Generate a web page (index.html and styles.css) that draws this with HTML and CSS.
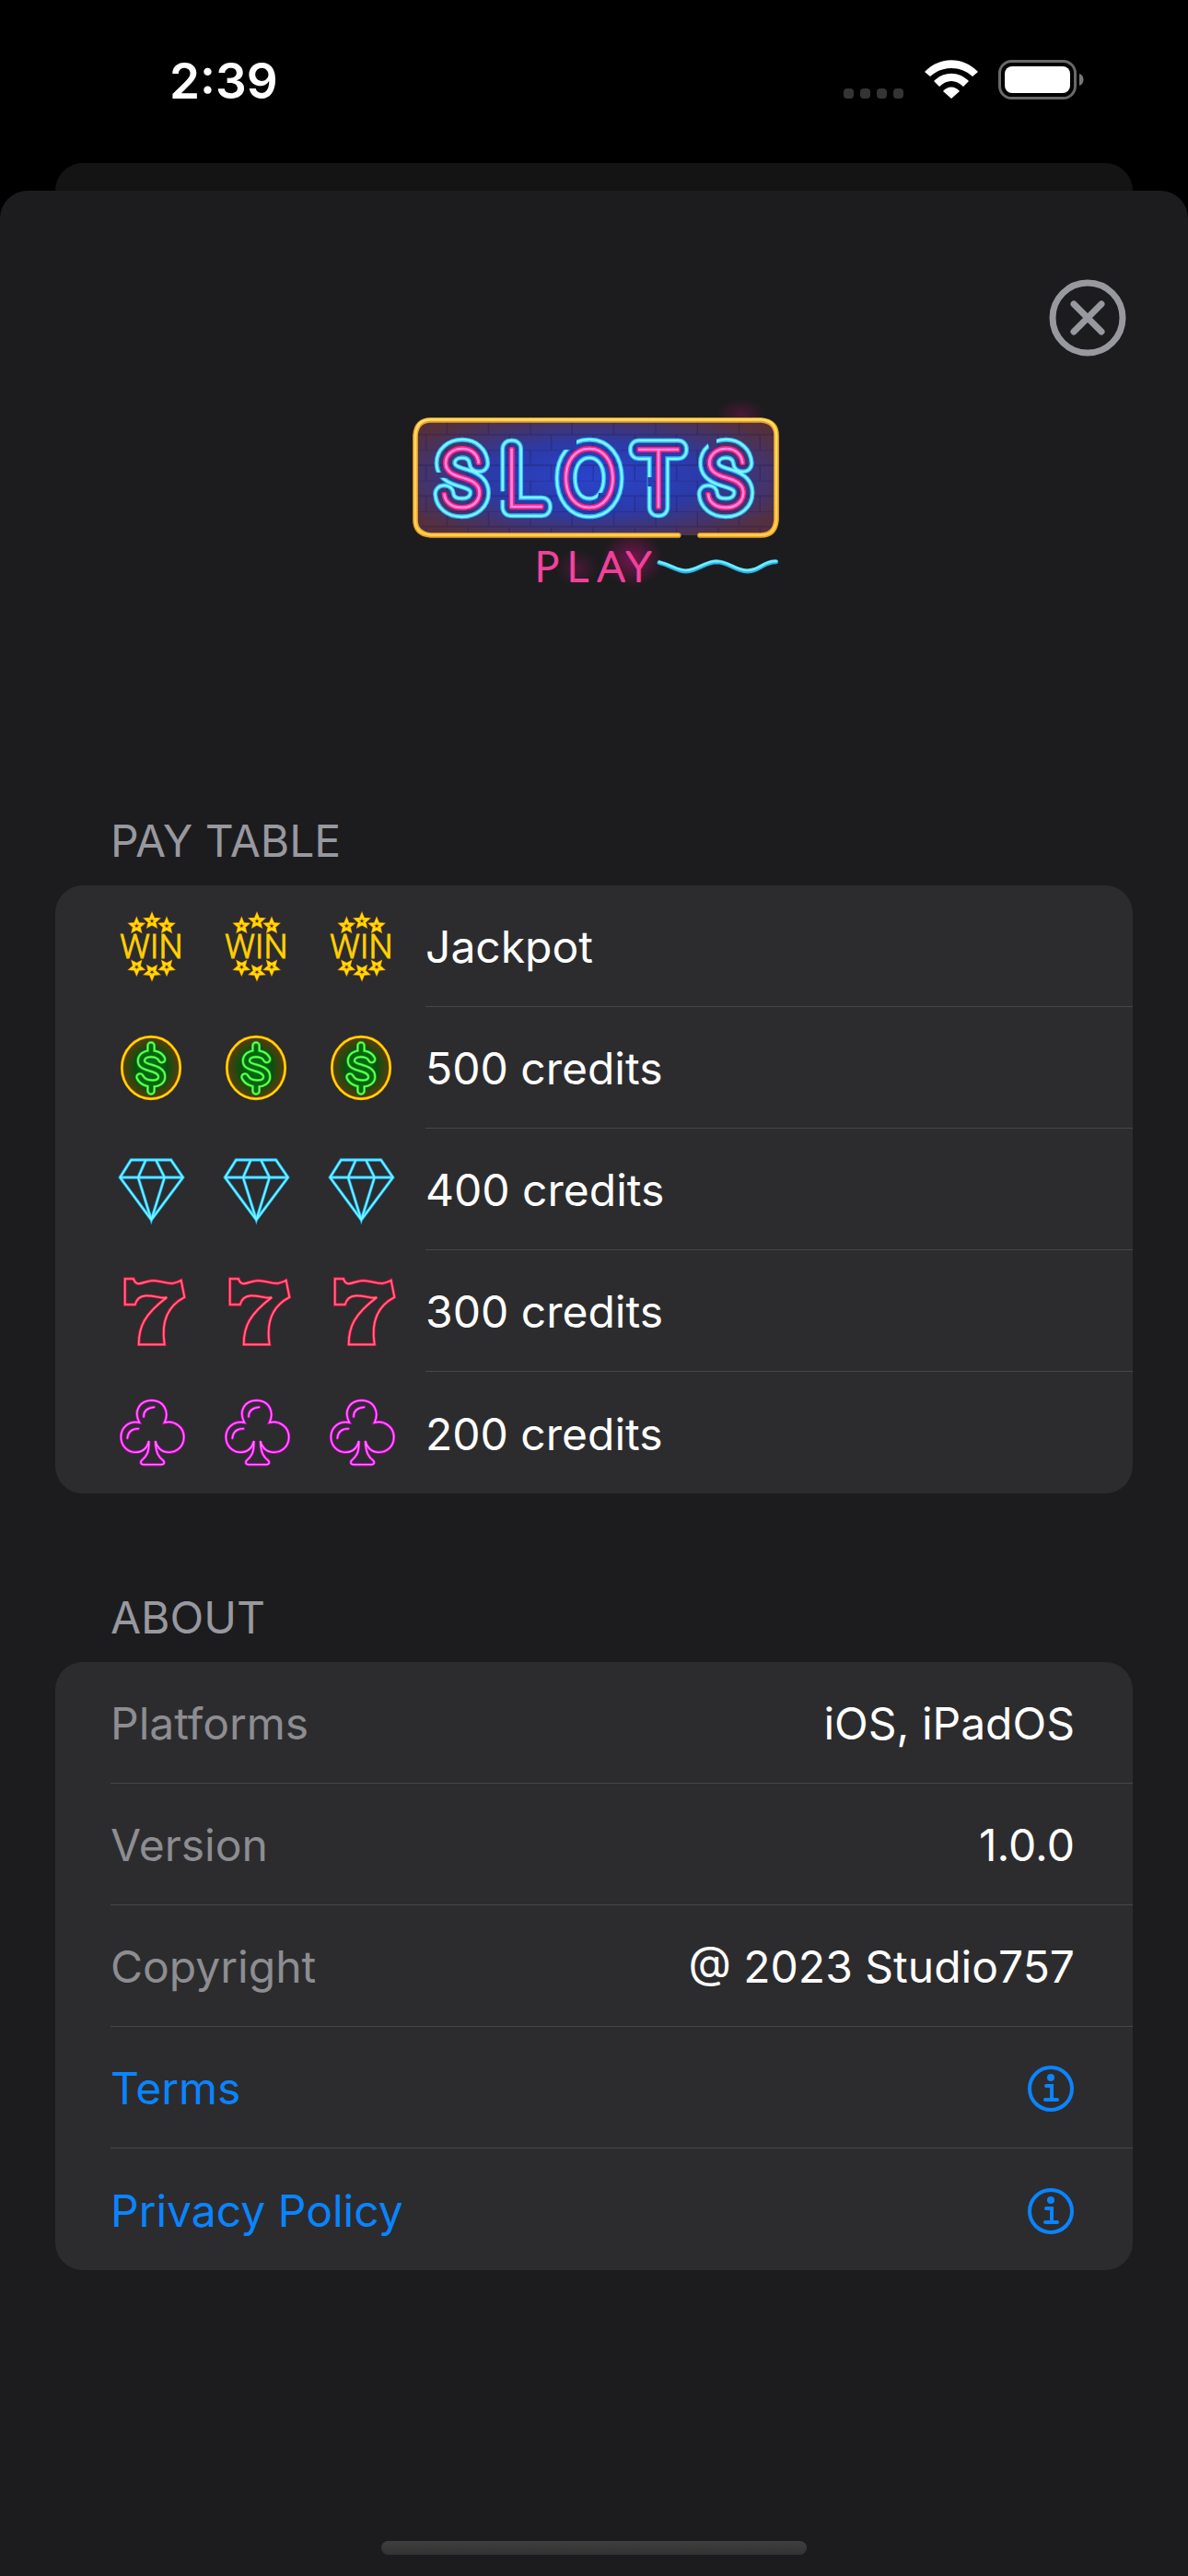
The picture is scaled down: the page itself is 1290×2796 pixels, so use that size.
FILE: index.html
```html
<!DOCTYPE html>
<html lang="en">
<head>
<meta charset="utf-8">
<meta name="viewport" content="width=device-width, initial-scale=1">
<title>Slots Play – Info</title>
<link rel="stylesheet" href="styles.css">
</head>
<body>

<svg class="sprite" aria-hidden="true">
  <defs>
    <path id="star" d="M0-18 5-6 18-5 8 4 11 16 0 10-11 16-8 4-18-5-5-6Z"/>
    <g id="stars">
      <use href="#star" x="165" y="88"/>
      <use href="#star" x="115" y="104"/>
      <use href="#star" x="213" y="104"/>
      <g transform="scale(1 -1)">
        <use href="#star" x="165" y="-256"/>
        <use href="#star" x="115" y="-240"/>
        <use href="#star" x="213" y="-240"/>
      </g>
    </g>
    <path id="dollar" d="M197 539C186 514 130 514 130 545C130 572 197 562 197 596C197 625 140 626 126 597M162 495V517M162 620V642"/>
    <path id="seven-line" d="M77 114H105C108 124 112 130 122 130C140 128 150 120 168 120C195 120 212 130 232 129C246 127 252 124 260 119L271 174C225 198 192 240 206 328H122C122 270 140 230 214 174C200 181 175 168 145 169C128 170 115 180 110 198H77Z"/>
    <path id="diamond-line" d="M97 117H227L266 174L163 312L61 174ZM61 174H266M145 117L120 174L163 312L206 174L178 117"/>
    <path id="club-line" d="M124 582C104 545 125 510 164 510C205 510 222 548 206 582C240 574 269 598 269 629C269 660 246 679 220 679C196 679 180 662 176 642C178 682 186 694 203 707C207 714 203 719 196 719H138C130 719 127 714 130 707C148 692 156 680 155 642C150 662 136 679 111 679C84 679 64 656 64 629C64 600 88 575 124 582ZM138 563Q138 535 172 532M85 633Q88 602 121 602"/>
    <radialGradient id="coin-glow">
      <stop offset="0" stop-color="#007a10"/>
      <stop offset=".55" stop-color="#0a5010"/>
      <stop offset="1" stop-color="#5c3a0c"/>
    </radialGradient>
  </defs>
  <symbol id="coin" viewBox="30 432 270 270">
    <ellipse cx="162" cy="567" rx="95" ry="101" fill="url(#coin-glow)" stroke="#ff9a00" stroke-width="9"/>
    <ellipse cx="162" cy="567" rx="95" ry="101" fill="none" stroke="#ffe000" stroke-width="5"/>
    <g fill="none" stroke-linecap="round">
      <use href="#dollar" stroke="#1fd02a" stroke-width="30"/>
      <use href="#dollar" stroke="#6cff5c" stroke-width="26"/>
      <use href="#dollar" stroke="#1fd02a" stroke-width="17"/>
      <use href="#dollar" stroke="#04660e" stroke-width="13"/>
    </g>
  </symbol>
  <symbol id="diamond" viewBox="30 78 270 270">
    <use href="#diamond-line" fill="none" stroke="#1cb2ff" stroke-width="10"/>
    <use href="#diamond-line" fill="none" stroke="#74f6ff" stroke-width="5"/>
  </symbol>
  <symbol id="seven" viewBox="30 84 270 270">
    <use href="#seven-line" fill="none" stroke="#f5083f" stroke-width="10"/>
    <use href="#seven-line" fill="none" stroke="#ff7088" stroke-width="5"/>
  </symbol>
  <symbol id="club" viewBox="30 480 270 270">
    <use href="#club-line" fill="none" stroke="#f000ee" stroke-width="9" stroke-linecap="round"/>
    <use href="#club-line" fill="none" stroke="#ff7cfb" stroke-width="4" stroke-linecap="round"/>
  </symbol>
  <symbol id="info" viewBox="0 0 52 52">
    <circle cx="26" cy="26" r="23" fill="none" stroke="currentColor" stroke-width="4"/>
    <circle cx="26" cy="14" r="4" fill="currentColor"/>
    <path d="M21 23H27V38M20 38H33" fill="none" stroke="currentColor" stroke-width="4" stroke-linecap="round"/>
  </symbol>
</svg>

<header class="status">
  <time class="status-time">2:39</time>
  <div class="status-icons">
    <svg class="signal" viewBox="0 0 66 12" aria-hidden="true" fill="#343434"><rect width="11" height="11" rx="4"/><rect x="18" width="11" height="11" rx="4"/><rect x="36" width="11" height="11" rx="4"/><rect x="54" width="11" height="11" rx="4"/></svg>
    <svg class="wifi" viewBox="0 0 58 43" role="img" aria-label="Wi-Fi" fill="#fff">
      <path d="M0 13C16-4 42-4 58 13L52 18C39 6 19 6 6 18Z"/>
      <path d="M10 23C21 12 37 12 48 23L42 29C34 21 24 21 16 29Z"/>
      <path d="M20 34C25 28 33 28 38 34L29 42Z"/>
    </svg>
    <svg class="battery" viewBox="0 0 95 43" role="img" aria-label="Battery full">
      <rect x="1.5" y="1.5" width="82" height="40" rx="13" fill="none" stroke="#696969" stroke-width="3"/>
      <rect x="7" y="7" width="71" height="29" rx="8" fill="#fff"/>
      <path d="M88 15C94 17 94 26 88 28Z" fill="#777"/>
    </svg>
  </div>
</header>

<div class="back-sheet"></div>

<main class="sheet">
  <button class="close" type="button" aria-label="Close">
    <svg viewBox="0 0 84 84" fill="none" stroke="currentColor" stroke-width="7" stroke-linecap="round" aria-hidden="true"><circle cx="42" cy="42" r="38"/><path d="M27 27 57 57M57 27 27 57"/></svg>
  </button>

  <svg class="logo" viewBox="0 0 1350 720" role="img" aria-label="Slots Play">
    <defs>
      <radialGradient id="wall" cx=".5" cy=".5" r=".6">
        <stop offset="0" stop-color="#2944cc"/>
        <stop offset=".5" stop-color="#2c3aa8"/>
        <stop offset="1" stop-color="#54303f"/>
      </radialGradient>
      <linearGradient id="gold" x1="0" y1="0" x2="0" y2="1">
        <stop offset="0" stop-color="#ffe060"/>
        <stop offset="1" stop-color="#ffd04c"/>
      </linearGradient>
      <radialGradient id="haze">
        <stop offset="0" stop-color="#b01070" stop-opacity=".6"/>
        <stop offset="1" stop-color="#b01070" stop-opacity="0"/>
      </radialGradient>
      <pattern id="bricks" width="136" height="100" patternUnits="userSpaceOnUse" y="5">
        <path d="M0 0H136M0 50H136M60 0V50M128 50V100" stroke="#1a1550" stroke-opacity=".35" stroke-width="4" fill="none"/>
      </pattern>
      <text id="word" class="logo-word" x="164 374 562 804 1024" y="394">SLOTS</text>
      <path id="gaps" fill="#000" stroke="none" d="M140 278H200V296H140ZM355 340H395V368H355ZM580 170H618V205H575ZM690 345H712V400H680ZM850 294H880V324H850ZM1040 160H1074V200H1050Z"/>
      <mask id="tube-outer" maskUnits="userSpaceOnUse" x="0" y="0" width="1350" height="720">
        <use href="#word" stroke="#fff" stroke-width="68"/>
        <use href="#word" stroke="#000" fill="#000" stroke-width="38"/>
        <use href="#gaps"/>
      </mask>
      <mask id="tube-inner" maskUnits="userSpaceOnUse" x="0" y="0" width="1350" height="720">
        <use href="#word" stroke="#fff" stroke-width="61"/>
        <use href="#word" stroke="#000" fill="#000" stroke-width="46"/>
        <use href="#gaps"/>
      </mask>
    </defs>
    <ellipse cx="1155" cy="90" rx="80" ry="50" fill="url(#haze)" opacity=".5"/>
    <ellipse cx="800" cy="560" rx="100" ry="90" fill="url(#haze)"/>
    <ellipse cx="620" cy="590" rx="70" ry="60" fill="url(#haze)" opacity=".5"/>
    <rect x="93" y="108" width="1176" height="375" rx="50" fill="url(#wall)"/>
    <rect x="93" y="108" width="1176" height="375" rx="50" fill="url(#bricks)"/>
    <path d="M950 483H143Q93 479 93 433V158Q97 108 143 108H1219Q1269 112 1269 158V433Q1265 483 1219 483H1020" fill="none" stroke="#eea22a" stroke-width="17" stroke-linecap="round"/>
    <path d="M950 482H143Q93 478 93 433V158Q97 106 143 106H1219Q1269 110 1269 158V433Q1265 482 1219 482H1020" fill="none" stroke="url(#gold)" stroke-width="8" stroke-linecap="round"/>
    <rect x="120" y="140" width="1130" height="310" fill="#28b8f8" mask="url(#tube-outer)"/>
    <rect x="120" y="140" width="1130" height="310" fill="#80f4ff" mask="url(#tube-inner)"/>
    <text class="logo-word logo-word-pink" x="164 374 562 804 1024" y="394">SLOTS</text>
    <use href="#word" fill="#ff86e8" stroke="#ff86e8" stroke-width="2"/>
    <text class="logo-play" x="482 587 686 780" y="634">PLAY</text>
    <path d="M888 572C930 582 945 600 975 600C1015 598 1035 570 1075 569C1115 570 1135 600 1175 600C1220 598 1225 568 1268 569" fill="none" stroke="#28b4ee" stroke-width="15" stroke-linecap="round"/>
    <path d="M888 570C930 580 945 597 975 597C1015 595 1035 567 1075 567C1115 568 1135 597 1175 597C1220 595 1225 566 1268 567" fill="none" stroke="#74ecf6" stroke-width="8" stroke-linecap="round"/>
  </svg>

  <section class="group group-pay">
    <h2 class="group-title">PAY TABLE</h2>
    <table class="card pay">
      <tbody>
        <tr>
          <td class="pay-symbols"><div class="reels">
            <svg class="reel" viewBox="30 36 270 270"><use href="#stars" class="star-glow"/><use href="#stars" class="star-line"/><text class="win" x="163" y="211">WIN</text></svg>
            <svg class="reel" viewBox="30 36 270 270"><use href="#stars" class="star-glow"/><use href="#stars" class="star-line"/><text class="win" x="163" y="211">WIN</text></svg>
            <svg class="reel" viewBox="30 36 270 270"><use href="#stars" class="star-glow"/><use href="#stars" class="star-line"/><text class="win" x="163" y="211">WIN</text></svg>
          </div></td>
          <td class="pay-prize">Jackpot</td>
        </tr>
        <tr>
          <td class="pay-symbols"><div class="reels"><svg class="reel"><use href="#coin"/></svg><svg class="reel"><use href="#coin"/></svg><svg class="reel"><use href="#coin"/></svg></div></td>
          <td class="pay-prize">500 credits</td>
        </tr>
        <tr>
          <td class="pay-symbols"><div class="reels"><svg class="reel"><use href="#diamond"/></svg><svg class="reel"><use href="#diamond"/></svg><svg class="reel"><use href="#diamond"/></svg></div></td>
          <td class="pay-prize">400 credits</td>
        </tr>
        <tr>
          <td class="pay-symbols"><div class="reels"><svg class="reel"><use href="#seven"/></svg><svg class="reel"><use href="#seven"/></svg><svg class="reel"><use href="#seven"/></svg></div></td>
          <td class="pay-prize">300 credits</td>
        </tr>
        <tr>
          <td class="pay-symbols"><div class="reels"><svg class="reel"><use href="#club"/></svg><svg class="reel"><use href="#club"/></svg><svg class="reel"><use href="#club"/></svg></div></td>
          <td class="pay-prize">200 credits</td>
        </tr>
      </tbody>
    </table>
  </section>

  <section class="group group-about">
    <h2 class="group-title">ABOUT</h2>
    <ul class="card about">
      <li class="row"><span class="row-label">Platforms</span><span>iOS, iPadOS</span></li>
      <li class="row"><span class="row-label">Version</span><span>1.0.0</span></li>
      <li class="row"><span class="row-label">Copyright</span><span>@ 2023 Studio757</span></li>
      <li><a class="row row-link" href="#terms">Terms<svg class="info"><use href="#info"/></svg></a></li>
      <li><a class="row row-link" href="#privacy">Privacy Policy<svg class="info"><use href="#info"/></svg></a></li>
    </ul>
  </section>

  <div class="home-indicator"></div>
</main>
</body>
</html>
```
FILE: styles.css
```css
* {
  box-sizing: border-box;
}

body {
  display: flex;
  flex-direction: column;
  min-height: 100vh;
  margin: 0;
  background: #000;
  color: #fff;
  font-family: Inter, "Liberation Sans", sans-serif;
  font-size: 48px;
  line-height: 60px;
}

svg {
  display: block;
}

.sprite {
  position: absolute;
  width: 0;
  height: 0;
}

/* Status bar */

.status {
  display: flex;
  justify-content: space-between;
  align-items: flex-start;
  height: 177px;
  padding: 58px 111px 0 184px;
}

.status-time {
  font-size: 53px;
  font-weight: 600;
}

.status-icons {
  display: flex;
  align-items: flex-end;
  gap: 22px;
  padding-top: 7px;
}

.signal {
  width: 66px;
  height: 12px;
}

.wifi {
  width: 58px;
  height: 43px;
}

.battery {
  width: 95px;
  height: 43px;
}

/* Sheets */

.back-sheet {
  height: 30px;
  margin: 0 60px;
  border-radius: 30px 30px 0 0;
  background: #141414;
}

.sheet {
  display: flex;
  flex: 1;
  flex-direction: column;
  padding: 96px 60px 23px;
  border-radius: 30px 30px 0 0;
  background: #1c1c1e;
}

.close {
  align-self: flex-end;
  width: 84px;
  height: 84px;
  margin-right: 7px;
  padding: 0;
  border: 0;
  background: none;
  color: #98989f;
}

.logo {
  align-self: center;
  width: 450px;
  height: 240px;
  margin-top: 33px;
}

.logo-word {
  font-family: Inter, sans-serif;
  font-size: 263px;
  font-weight: 100;
  stroke-linejoin: round;
  stroke-linecap: round;
}

.logo-word-pink {
  fill: #ff1f7a;
  stroke: #ff1f7a;
  stroke-width: 12px;
}

.logo-play {
  font-family: Lato, sans-serif;
  font-size: 136px;
  font-weight: 300;
  fill: #ff7fd8;
  stroke: #f0409a;
  stroke-width: 6px;
  stroke-linejoin: round;
}

/* Groups */

.group-pay {
  margin-top: 223px;
}

.group-about {
  margin-top: 105px;
}

.group-title {
  margin: 0 60px 18px;
  color: #98989f;
  font-size: 48px;
  font-weight: 400;
}

.card {
  width: 100%;
  margin: 0;
  padding: 0;
  border-radius: 30px;
  background: #2c2c2e;
}

.pay {
  border-spacing: 0;
}

.pay td {
  height: 132px;
  padding: 0;
}

.pay .pay-symbols {
  width: 402px;
  padding: 0 24px 0 60px;
}

.pay .pay-prize {
  padding-top: 3px;
}

.reels {
  display: flex;
  gap: 24px;
}

.reel {
  width: 90px;
  height: 90px;
}

.pay tr:not(:last-child) .pay-prize {
  border-bottom: 1px solid #464649;
}

.win {
  font-family: Roboto, sans-serif;
  font-size: 110px;
  font-weight: 300;
  fill: #ffe000;
  stroke: #ffc400;
  stroke-width: 3px;
  text-anchor: middle;
}

.star-glow {
  fill: none;
  stroke: #ff9a00;
  stroke-width: 10px;
}

.star-line {
  fill: none;
  stroke: #ffe000;
  stroke-width: 6px;
}

.about {
  list-style: none;
}

.row {
  display: flex;
  align-items: center;
  justify-content: space-between;
  height: 132px;
  margin-left: 60px;
  padding: 3px 63px 0 0;
  border-bottom: 1px solid #464649;
}

.about li:last-child .row {
  border-bottom: 0;
}

.row-label {
  color: #8d8d92;
}

.row-link {
  color: #0a84ff;
  text-decoration: none;
}

.info {
  width: 52px;
  height: 52px;
}

.home-indicator {
  align-self: center;
  width: 462px;
  height: 15px;
  margin-top: auto;
  border-radius: 8px;
  background: linear-gradient(#3e3e3f, #333334);
}
```
